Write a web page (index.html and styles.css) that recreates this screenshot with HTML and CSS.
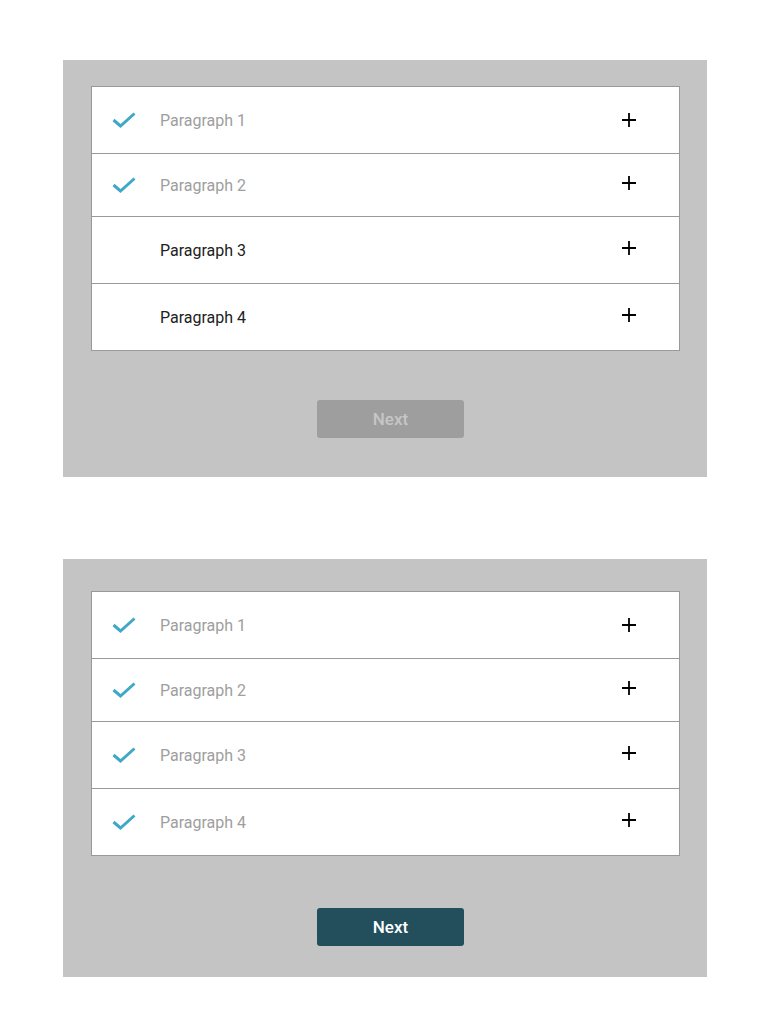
FILE: index.html
```html
<!DOCTYPE html>
<html lang="en">
<head>
  <meta charset="UTF-8">
  <meta name="viewport" content="width=device-width, initial-scale=1.0">
  <title>Paragraph checklist</title>
  <link rel="stylesheet" href="styles.css">
</head>
<body>
  <!-- Step in progress -->
  <div class="panel">
    <ul class="list">
      <li class="item done">
        <span class="check"><svg viewBox="0 0 24 16" width="24" height="16"><polyline points="1.5,8 8.5,14 22.5,1.5" /></svg></span>
        <span class="label">Paragraph 1</span>
        <span class="plus"><svg viewBox="0 0 16 16" width="16" height="16"><path d="M8 1v14M1 8h14" /></svg></span>
      </li>
      <li class="item done short">
        <span class="check"><svg viewBox="0 0 24 16" width="24" height="16"><polyline points="1.5,8 8.5,14 22.5,1.5" /></svg></span>
        <span class="label">Paragraph 2</span>
        <span class="plus"><svg viewBox="0 0 16 16" width="16" height="16"><path d="M8 1v14M1 8h14" /></svg></span>
      </li>
      <li class="item">
        <span class="check"></span>
        <span class="label">Paragraph 3</span>
        <span class="plus"><svg viewBox="0 0 16 16" width="16" height="16"><path d="M8 1v14M1 8h14" /></svg></span>
      </li>
      <li class="item">
        <span class="check"></span>
        <span class="label">Paragraph 4</span>
        <span class="plus"><svg viewBox="0 0 16 16" width="16" height="16"><path d="M8 1v14M1 8h14" /></svg></span>
      </li>
    </ul>
    <div class="actions">
      <button class="next" disabled>Next</button>
    </div>
  </div>

  <!-- All done -->
  <div class="panel complete">
    <ul class="list">
      <li class="item done">
        <span class="check"><svg viewBox="0 0 24 16" width="24" height="16"><polyline points="1.5,8 8.5,14 22.5,1.5" /></svg></span>
        <span class="label">Paragraph 1</span>
        <span class="plus"><svg viewBox="0 0 16 16" width="16" height="16"><path d="M8 1v14M1 8h14" /></svg></span>
      </li>
      <li class="item done short">
        <span class="check"><svg viewBox="0 0 24 16" width="24" height="16"><polyline points="1.5,8 8.5,14 22.5,1.5" /></svg></span>
        <span class="label">Paragraph 2</span>
        <span class="plus"><svg viewBox="0 0 16 16" width="16" height="16"><path d="M8 1v14M1 8h14" /></svg></span>
      </li>
      <li class="item done">
        <span class="check"><svg viewBox="0 0 24 16" width="24" height="16"><polyline points="1.5,8 8.5,14 22.5,1.5" /></svg></span>
        <span class="label">Paragraph 3</span>
        <span class="plus"><svg viewBox="0 0 16 16" width="16" height="16"><path d="M8 1v14M1 8h14" /></svg></span>
      </li>
      <li class="item done">
        <span class="check"><svg viewBox="0 0 24 16" width="24" height="16"><polyline points="1.5,8 8.5,14 22.5,1.5" /></svg></span>
        <span class="label">Paragraph 4</span>
        <span class="plus"><svg viewBox="0 0 16 16" width="16" height="16"><path d="M8 1v14M1 8h14" /></svg></span>
      </li>
    </ul>
    <div class="actions">
      <button class="next">Next</button>
    </div>
  </div>
</body>
</html>
```

FILE: styles.css
```css
body {
  margin: 0;
  padding: 60px 0 0 63px;
  font-family: Roboto, "Liberation Sans", sans-serif;
  background: #fff;
}
.panel {
  box-sizing: border-box;
  width: 644px;
  height: 417px;
  margin-bottom: 82px;
  padding: 26px 27px 0 28px;
  background: #c4c4c4;
}
.panel.complete {
  height: 418px;
  padding-top: 32px;
}
.list {
  list-style: none;
  margin: 0;
  padding: 0;
  background: #fff;
  border: 1px solid #999;
}
.item {
  display: flex;
  align-items: center;
  height: 66px;
  padding: 0 42px 0 20px;
  border-top: 1px solid #999;
  font-size: 16px;
  color: #212121;
}
.item:first-child {
  border-top: none;
}
.item.short {
  height: 62px;
}
.item.done .label {
  color: #9e9e9e;
}
.check {
  width: 24px;
  height: 16px;
  margin-right: 24px;
}
.check svg {
  display: block;
  fill: none;
  stroke: #3fa8c8;
  stroke-width: 3;
}
.label {
  flex: 1;
}
.plus {
  width: 16px;
  height: 16px;
  margin-top: -1px;
}
.item + .item .plus {
  margin-top: -4px;
}
.plus svg {
  display: block;
  stroke: #000;
  stroke-width: 1.8;
}
.actions {
  display: flex;
  justify-content: center;
  padding-left: 10px;
  margin-top: 49px;
}
.complete .actions {
  margin-top: 52px;
}
.next {
  width: 147px;
  height: 38px;
  border: none;
  border-radius: 3px;
  background: #234f5d;
  color: #fff;
  font-family: Roboto, "Liberation Sans", sans-serif;
  font-size: 17px;
  font-weight: 500;
  cursor: pointer;
}
.next:disabled {
  background: #9e9e9e;
  color: #c6c6c6;
  cursor: default;
}
```
